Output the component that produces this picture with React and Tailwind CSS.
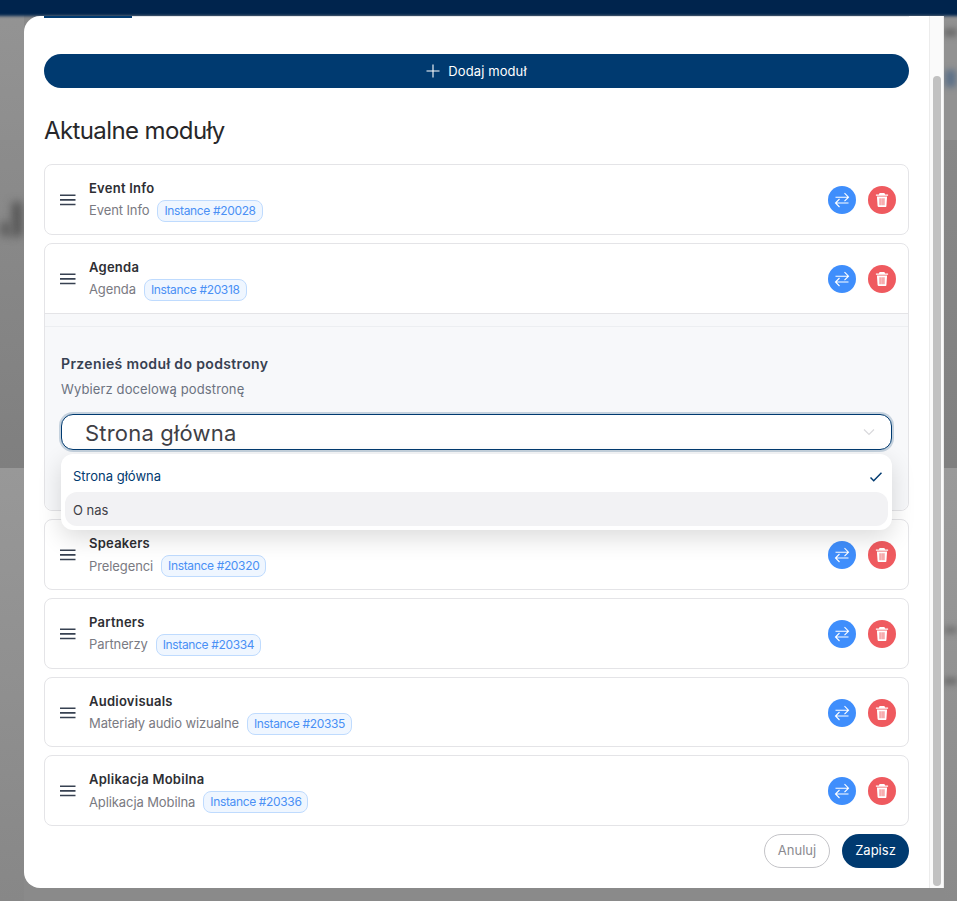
import React from "react";

const F = { fontFamily: "Inter, 'Noto Sans', sans-serif" };

function Grip() {
  return (
    <svg width="16" height="16" viewBox="0 0 16 16" className="shrink-0 text-[#374151]">
      <path d="M0 3.3h15.5M0 7.9h15.5M0 12.5h15.5" stroke="currentColor" strokeWidth="1.6" fill="none" />
    </svg>
  );
}

function Swap() {
  return (
    <svg width="16" height="16" viewBox="0 0 16 16" fill="none" stroke="#fff" strokeWidth="1.1">
      <path d="M1.5 5.2h13M10.5 1.2L14.5 5.2L10.5 9.2" />
      <path d="M14.5 11h-13M5.5 7L1.5 11L5.5 15" />
    </svg>
  );
}

function Trash() {
  return (
    <svg width="16" height="16" viewBox="0 0 16 16" fill="#fff">
      <path d="M5.6 1h4.8l.7 1.4h3v1.4H1.9V2.4h3L5.6 1z" />
      <path fillRule="evenodd" d="M2.9 4.6h10.2l-.7 9.4c0 .6-.5 1-1.1 1H4.7c-.6 0-1-.4-1.1-1L2.9 4.6zM5.6 6.2v7h.9v-7h-.9zM7.6 6.2v7h.9v-7h-.9zM9.5 6.2v7h.9v-7h-.9z" />
    </svg>
  );
}

function Head({ title, sub, id, tall }) {
  return (
    <div className={`${tall ? "h-[69.33px]" : "h-[68.67px]"} pt-[1.33px] flex items-center pl-[14.5px] pr-[12px] shrink-0`}>
      <Grip />
      <div className="ml-[13.5px] flex-1 min-w-0 self-start pt-[12.67px]">
        <div className="text-[13px] tracking-[0.25px] leading-[18px] font-semibold text-[#2e2e33]">{title}</div>
        <div className="mt-[3px] flex items-center h-[22px]">
          <span className="text-[13px] tracking-[-0.1px] text-[#7a7a82]">{sub}</span>
          <span className="ml-2 h-[22px] flex items-center rounded-[8px] border border-[#bfdbfe] bg-[#eff6ff] px-[6px] text-[12px] tracking-[-0.35px] text-[#4a90f5]">
            Instance #{id}
          </span>
        </div>
      </div>
      <div className="flex gap-[12px]">
        <div className="w-[28px] h-[28px] rounded-full bg-[#3f8efc] flex items-center justify-center"><Swap /></div>
        <div className="w-[28px] h-[28px] rounded-full bg-[#ef5a5f] flex items-center justify-center"><Trash /></div>
      </div>
    </div>
  );
}

function Card({ title, sub, id }) {
  return (
    <div className="rounded-[8px] border border-[#e4e4e7] bg-white">
      <Head title={title} sub={sub} id={id} />
    </div>
  );
}

function Backdrop() {
  return (
    <>
      <div className="absolute left-0 top-0 w-[24px] h-[140px] bg-gradient-to-b from-[#949494] to-[#8e8e8e]" />
      <div className="absolute left-0 top-[140px] w-[24px] h-[328px] bg-gradient-to-b from-[#8c8c8c] to-[#7f7f7f]" />
      <div className="absolute left-0 top-[468px] w-[24px] h-[433px] bg-gradient-to-b from-[#989898] to-[#878787]" />
      <div className="absolute left-[12px] top-[202px] w-[10px] h-[34px] bg-[#555] blur-[4px]" />
      <div className="absolute left-[0px] top-[222px] w-[12px] h-[14px] bg-[#606060] blur-[4px]" />
      <div className="absolute right-0 top-0 w-[13px] h-[140px] bg-[#929292]" />
      <div className="absolute right-0 top-[140px] w-[13px] h-[328px] bg-gradient-to-b from-[#888] to-[#808080]" />
      <div className="absolute right-0 top-[468px] w-[13px] h-[433px] bg-gradient-to-b from-[#9a9a9a] to-[#8a8a8a]" />
      <div className="absolute right-0 top-[29px] w-[13px] h-[7px] bg-[#666] blur-[3px]" />
      <div className="absolute right-[1px] top-[70px] w-[11px] h-[17px] bg-[#5d7188] blur-[3px]" />
      <div className="absolute right-0 top-[627px] w-[13px] h-[6px] bg-[#6e6e6e] blur-[3px]" />
      <div className="absolute right-0 top-[678px] w-[13px] h-[6px] bg-[#666] blur-[3px]" />
      <div className="absolute -left-[4px] -right-[4px] -top-[4px] h-[20px] bg-[#00244d] z-[1] blur-[1.5px]" />
    </>
  );
}

export default function App() {
  return (
    <div style={F} className="relative h-[901px] w-[957px] overflow-hidden bg-[#8a8a8a]">
      <Backdrop />

      <div className="relative z-[2] ml-[24px] mt-[16px] w-[920px] h-[872px] bg-white rounded-l-[16px] flex overflow-hidden">
        <div className="w-[905px] pl-[20px] pr-[20px] flex flex-col">
          <div className="flex h-[2px] border-t border-[#e5e7eb] relative">
            <div className="absolute left-0 -top-px w-[88px] h-[2px] bg-[#003a70]" />
          </div>
          <button className="mt-[36px] h-[34px] rounded-full bg-[#003a70] text-white text-[13px] flex items-center justify-center gap-[8px]">
            <svg width="14" height="14" viewBox="0 0 14 14" stroke="#fff" strokeWidth="1.1"><path d="M7 0.5v13M0.5 7h13" /></svg>
            <span className="pt-[1px] tracking-[0.1px]">Dodaj moduł</span>
          </button>
          <h2 className="mt-[27px] text-[24px] tracking-[-0.6px] leading-[32px] font-normal text-[#27272a]">Aktualne moduły</h2>
          <div className="mt-[17px] flex flex-col gap-[8px]">
            <Card title="Event Info" sub="Event Info" id="20028" />
            <div className="relative rounded-[8px] border border-[#e4e4e7] bg-white h-[268.67px] flex flex-col">
              <Head title="Agenda" sub="Agenda" id="20318" tall />
              <div className="flex-1 rounded-b-[8px] border-t border-[#e4e4e7] bg-[#f7f8fa] flex flex-col">
                <div className="h-[13px] border-b border-[#eceef1]" />
                <div className="px-[16px] pt-[27px]">
                  <div className="text-[14px] tracking-[0.36px] leading-[20px] font-semibold text-[#374151]">Przenieś moduł do podstrony</div>
                  <div className="mt-[6px] text-[13px] tracking-[0.12px] leading-[18px] text-[#6b7280]">Wybierz docelową podstronę</div>
                  <div className="mt-[16px] h-[36px] rounded-[12px] border border-[#003a70] bg-white ring-2 ring-[#003a70]/20 flex items-center pl-[23px] pr-[16px] text-[22px] tracking-[0.2px] text-[#3f3f46]">
                    <span className="flex-1 pt-[4px]">Strona główna</span>
                    <svg width="12" height="8" viewBox="0 0 12 8" fill="none" stroke="#d9d9dc" strokeWidth="1.2"><path d="M1 1.5l5 5 5-5" /></svg>
                  </div>
                </div>
              </div>
              <div className="absolute left-[16px] right-[16px] top-[210px] z-10 h-[76px] rounded-[12px] bg-white p-[4px] shadow-[0_8px_24px_rgba(0,0,0,0.14)]">
                <div className="h-[33px] mt-[1px] pl-[8px] pr-[6px] pt-[4px] flex items-center justify-between text-[13px] text-[#003a70]">
                  Strona główna
                  <svg width="12" height="10" viewBox="0 0 12 10" fill="none" stroke="#003a70" strokeWidth="1.5"><path d="M0.5 5.5l3.2 3.2L11.5 0.8" /></svg>
                </div>
                <div className="h-[34px] px-[8px] pt-[4px] flex items-center rounded-[12px] bg-[#f2f2f4] text-[13px] text-[#3f3f46]">O nas</div>
              </div>
            </div>
            <Card title="Speakers" sub="Prelegenci" id="20320" />
            <Card title="Partners" sub="Partnerzy" id="20334" />
            <Card title="Audiovisuals" sub="Materiały audio wizualne" id="20335" />
            <Card title="Aplikacja Mobilna" sub="Aplikacja Mobilna" id="20336" />
          </div>
          <div className="mt-[8px] flex justify-end gap-[12px]">
            <button className="w-[66px] h-[34px] rounded-full border border-[#c4c4c8] text-[13px] text-[#8a8a90]">Anuluj</button>
            <button className="w-[67px] h-[34px] rounded-full bg-[#003a70] text-[13px] text-white">Zapisz</button>
          </div>
        </div>
        <div className="w-[15px] border-x border-[#ececec] bg-[#fafafa] pt-[60px] pb-[2px] pl-[3px] pr-[2px]">
          <div className="h-full rounded-full bg-[#c1c1c1]" />
        </div>
      </div>
    </div>
  );
}
